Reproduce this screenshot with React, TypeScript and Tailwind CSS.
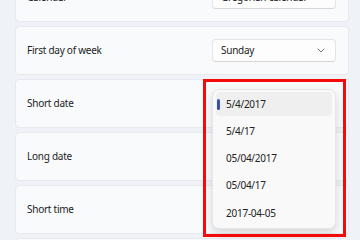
import React from "react";

const font = { fontFamily: '"Noto Sans", "Open Sans", sans-serif' };

function Chevron() {
  return (
    <svg width="8" height="5" viewBox="0 0 8 5" fill="none">
      <path d="M1 1l3 3 3-3" stroke="#6b6b6b" strokeWidth="0.9" strokeLinecap="round" strokeLinejoin="round" />
    </svg>
  );
}

function Select({ value }: { value?: string }) {
  return (
    <div className="w-[124px] h-[23px] rounded-[4px] bg-[#fdfdfd] border border-[#e5e5e5] border-b-[#d6d6d6] flex items-center justify-between pl-[8px] pr-[10px] text-[10px] tracking-[-0.25px] text-[#222222]">
      <span>{value}</span>
      <Chevron />
    </div>
  );
}

function Card({ label, value }: { label: string; value?: string }) {
  return (
    <div className="h-[49px] shrink-0 rounded-[4px] bg-[#f9fafc] border border-[#e7e9ee] flex items-center justify-between pl-[11px] pr-[12px]">
      <span className="text-[10px] tracking-[-0.25px] text-[#222222]">{label}</span>
      {value !== undefined && <Select value={value} />}
    </div>
  );
}

const items = ["5/4/2017", "5/4/17", "05/04/2017", "05/04/17", "2017-04-05"];

export default function App() {
  return (
    <div className="relative w-[360px] h-[240px] overflow-hidden bg-[#eff2f7]" style={font}>
      <div className="flex flex-col gap-[4px] pl-[15px] pr-[11px] mt-[-27px]">
        <Card label="Calendar" value="Gregorian calendar" />
        <Card label="First day of week" value="Sunday" />
        <Card label="Short date" value="" />
        <Card label="Long date" />
        <Card label="Short time" />
        <div className="h-[49px] shrink-0 rounded-[4px] bg-[#f9fafc] border border-[#e7e9ee]" />
      </div>

      <div className="absolute left-[212px] top-[89px] w-[124px] h-[140px] rounded-[7px] bg-[#f9f9f9] border border-[#e6e6e6] shadow-[0_4px_10px_rgba(0,0,0,0.14)] flex flex-col gap-[3.25px] px-[3px] pt-[2px]">
        {items.map((t, i) => (
          <div
            key={t}
            className={
              "relative h-[24px] shrink-0 rounded-[4px] flex items-center pl-[10px] text-[10px] tracking-[-0.25px] text-[#222222] " +
              (i === 0 ? "bg-[#efefef]" : "")
            }
          >
            {i === 0 && (
              <span className="absolute left-[1px] top-[7px] w-[3px] h-[11px] rounded-full bg-[#3f4fa6]" />
            )}
            {t}
          </div>
        ))}
      </div>

      <div className="absolute left-[203px] top-[79px] w-[143px] h-[158px] border-[3.5px] border-[#f50a0a]" />
    </div>
  );
}
